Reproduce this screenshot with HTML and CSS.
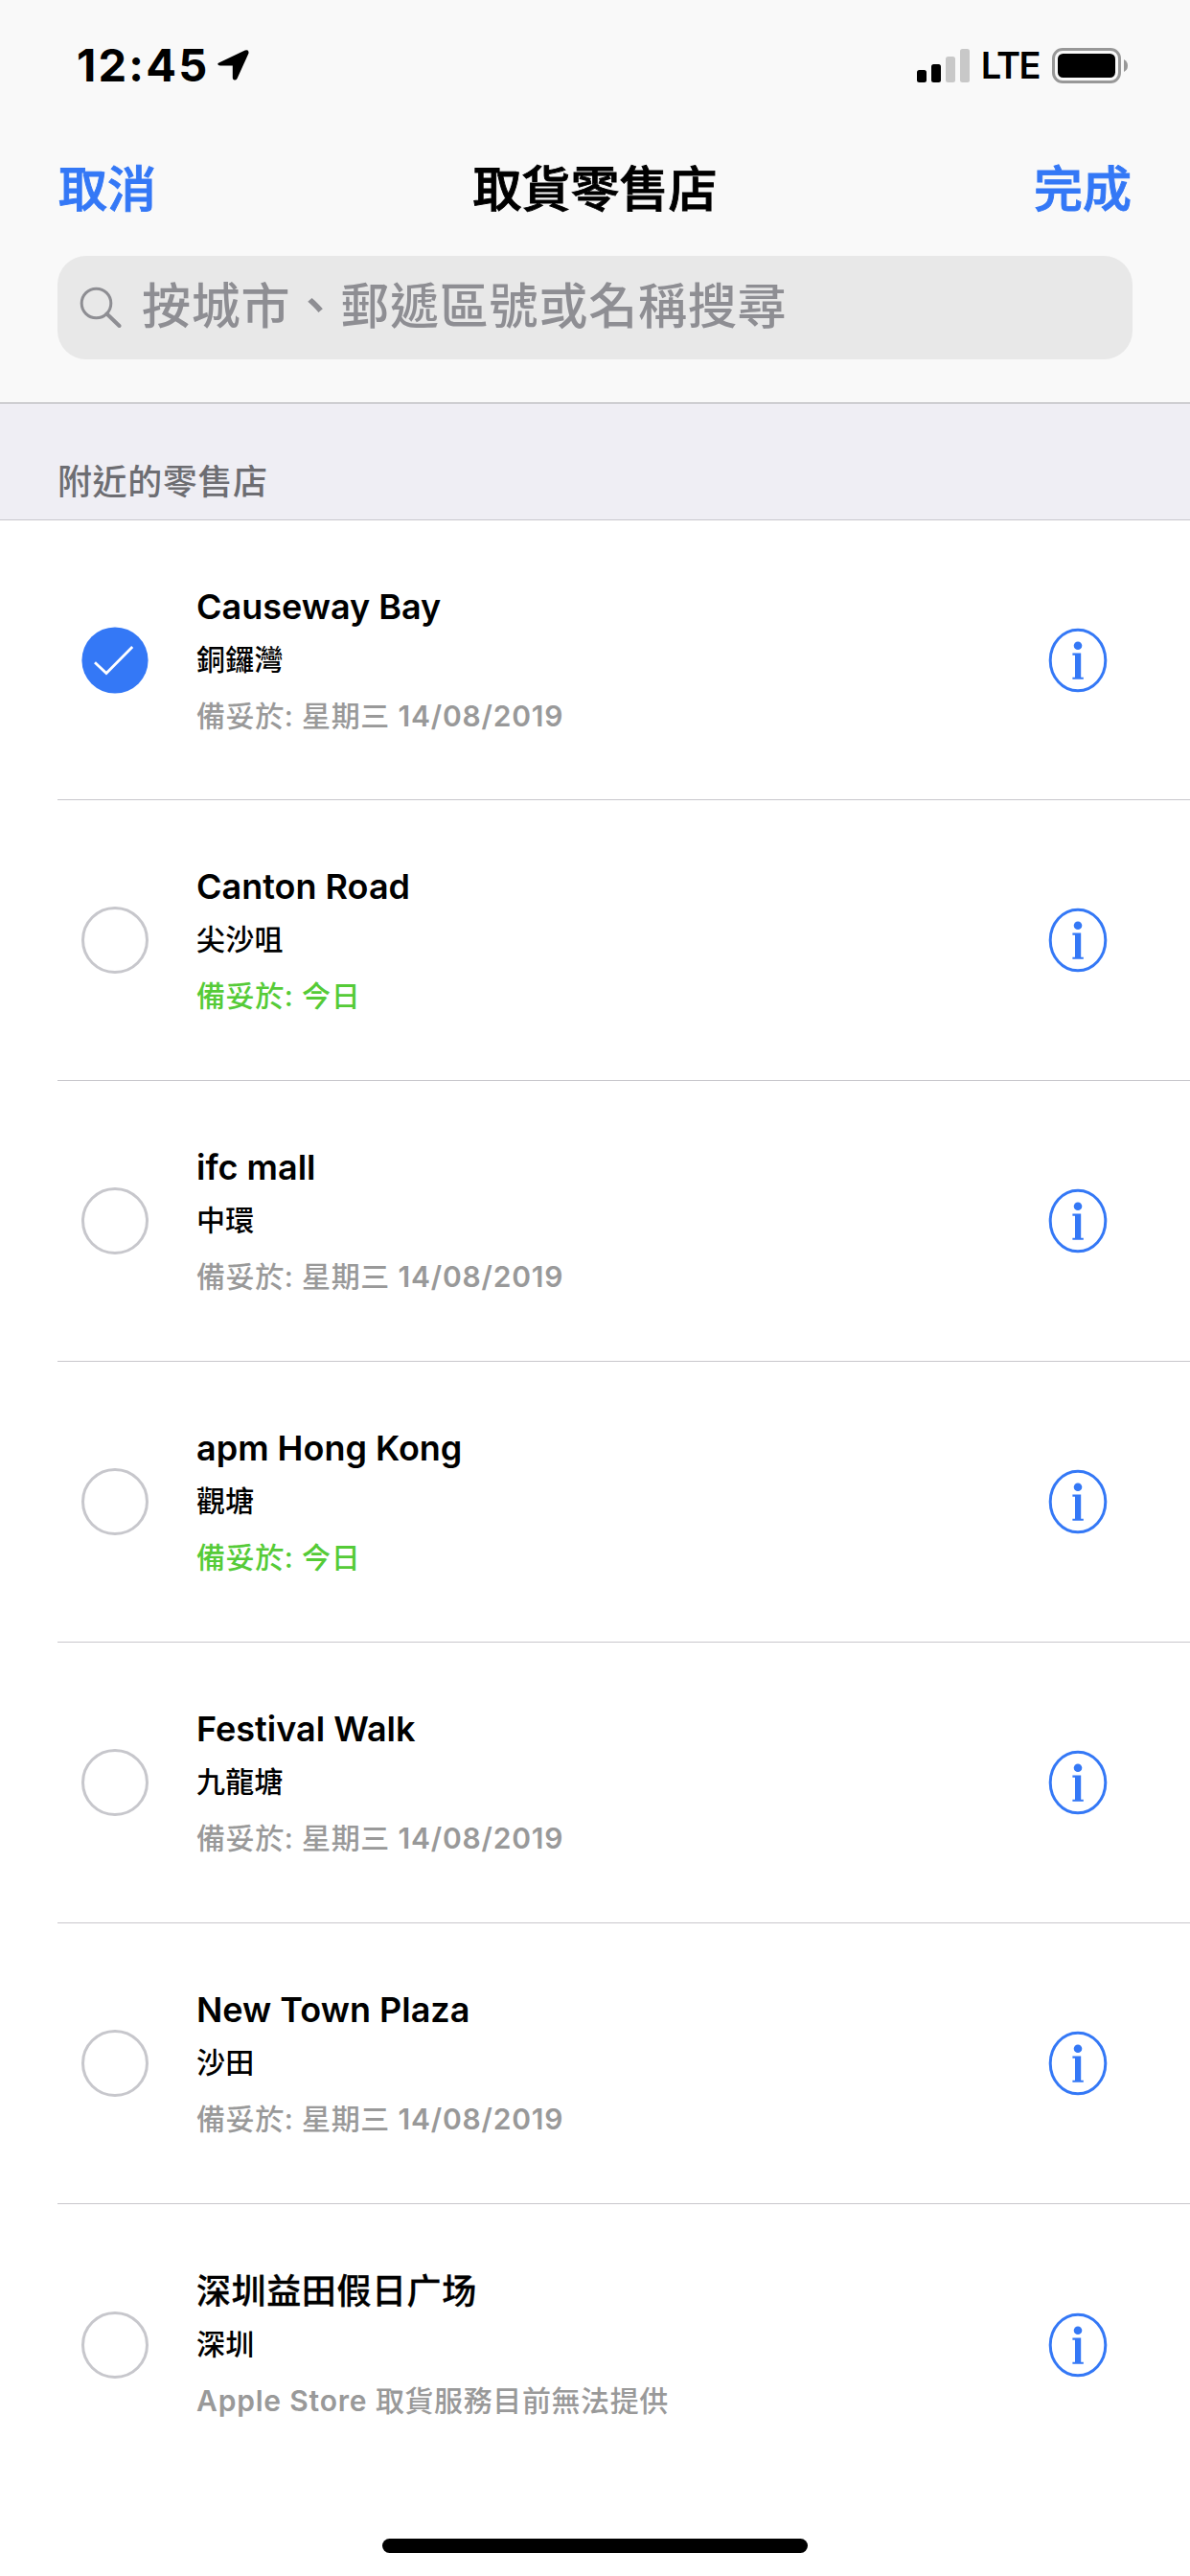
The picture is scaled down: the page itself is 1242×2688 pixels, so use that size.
FILE: index.html
```
<!DOCTYPE html>
<html lang="zh-HK">
<head>
  <meta charset="UTF-8" />
  <meta name="viewport" content="width=device-width, initial-scale=1.0" />
  <title>取貨零售店</title>
  <link rel="stylesheet" href="styles.css">
</head>
<body>
  <svg class="defs">
    <symbol id="info" viewBox="0 0 62 68">
      <ellipse cx="31" cy="34" rx="28.8" ry="31.8" fill="none" stroke="currentColor" stroke-width="3" />
      <circle cx="31" cy="18.8" r="4.3" fill="currentColor" />
      <path d="M25.4 26.6H34.2V51.8H36.8V53.8H25.4V51.8H28V28.8H25.4Z" fill="currentColor" />
    </symbol>
  </svg>

  <header>
    <div class="status-bar">
      <div class="status-left">
        <span class="time">12:45</span>
        <svg class="location" viewBox="0 0 33 32">
          <path d="M2 13.2L28.7 .6Q33 -.6 32.5 3.6L20.5 30Q18.8 32.6 16.6 31Q15.8 30.4 15.8 29V16.6H2.8Q.4 16.4 .2 14.8Q.2 13.8 2 13.2Z" />
        </svg>
      </div>
      <div class="status-right">
        <svg class="signal" viewBox="0 0 55 35">
          <rect x="0" y="22" width="10" height="13" rx="2.5" />
          <rect x="15" y="16" width="10" height="19" rx="2.5" />
          <rect x="30" y="8" width="10" height="27" rx="2.5" fill="#c8c8c8" />
          <rect x="45" y="0" width="10" height="35" rx="2.5" fill="#c8c8c8" />
        </svg>
        <span class="network">LTE</span>
        <svg class="battery" viewBox="0 0 80 37">
          <rect x="1.5" y="1.5" width="69" height="34" rx="9.5" fill="none" stroke="#989898" stroke-width="3" />
          <rect x="6" y="6" width="60" height="25" rx="5.5" />
          <path d="M75 12Q79 14 79 18.5T75 25Z" fill="#989898" />
        </svg>
      </div>
    </div>

    <nav>
      <a class="cancel" href="#">取消</a>
      <h1>取貨零售店</h1>
      <a class="done" href="#">完成</a>
    </nav>

    <div class="search">
      <svg class="search-icon" viewBox="0 0 44 44">
        <circle cx="17.5" cy="17.5" r="15.3" fill="none" stroke="#8e8e93" stroke-width="3" />
        <path d="M28.5 28.5L41.5 41" stroke="#8e8e93" stroke-width="4" stroke-linecap="round" />
      </svg>
      <span>按城市、郵遞區號或名稱搜尋</span>
    </div>
  </header>

  <h2>附近的零售店</h2>

  <ul class="stores">
    <li class="store">
      <svg class="radio" viewBox="0 0 70 70">
        <circle cx="35" cy="35" r="34.6" fill="#3478f6" />
        <path d="M14 37.2L26 48.6L53.2 21" fill="none" stroke="#fff" stroke-width="2.8" />
      </svg>
      <div class="details">
        <div class="name">Causeway Bay</div>
        <div class="area">銅鑼灣</div>
        <div class="ready">備妥於: 星期三 <b>14/08/2019</b></div>
      </div>
      <svg class="info"><use href="#info" /></svg>
    </li>
    <li class="store">
      <span class="radio empty"></span>
      <div class="details">
        <div class="name">Canton Road</div>
        <div class="area">尖沙咀</div>
        <div class="ready today">備妥於: 今日</div>
      </div>
      <svg class="info"><use href="#info" /></svg>
    </li>
    <li class="store">
      <span class="radio empty"></span>
      <div class="details">
        <div class="name">ifc mall</div>
        <div class="area">中環</div>
        <div class="ready">備妥於: 星期三 <b>14/08/2019</b></div>
      </div>
      <svg class="info"><use href="#info" /></svg>
    </li>
    <li class="store">
      <span class="radio empty"></span>
      <div class="details">
        <div class="name">apm Hong Kong</div>
        <div class="area">觀塘</div>
        <div class="ready today">備妥於: 今日</div>
      </div>
      <svg class="info"><use href="#info" /></svg>
    </li>
    <li class="store">
      <span class="radio empty"></span>
      <div class="details">
        <div class="name">Festival Walk</div>
        <div class="area">九龍塘</div>
        <div class="ready">備妥於: 星期三 <b>14/08/2019</b></div>
      </div>
      <svg class="info"><use href="#info" /></svg>
    </li>
    <li class="store">
      <span class="radio empty"></span>
      <div class="details">
        <div class="name">New Town Plaza</div>
        <div class="area">沙田</div>
        <div class="ready">備妥於: 星期三 <b>14/08/2019</b></div>
      </div>
      <svg class="info"><use href="#info" /></svg>
    </li>
    <li class="store">
      <span class="radio empty"></span>
      <div class="details">
        <div class="name chinese" lang="zh-CN">深圳益田假日广场</div>
        <div class="area">深圳</div>
        <div class="ready"><b>Apple Store</b> 取貨服務目前無法提供</div>
      </div>
      <svg class="info"><use href="#info" /></svg>
    </li>
  </ul>

  <div class="home-indicator"></div>
</body>
</html>
```
FILE: styles.css
```
* {
  box-sizing: border-box;
}

body {
  margin: 0;
  height: 2688px;
  display: flex;
  flex-direction: column;
  font-family: Inter, "Noto Sans CJK TC", sans-serif;
  background-color: #fff;
  color: #000;
}

.defs {
  position: absolute;
  width: 0;
  height: 0;
}

header {
  height: 421px;
  background-color: #f9f9f9;
  border-bottom: 1px solid #a7a7aa;
}

.status-bar {
  display: flex;
  justify-content: space-between;
  height: 132px;
  padding: 0 64px 0 80px;
}

.status-left,
.status-right {
  display: flex;
  align-items: center;
  height: 136px;
}

.time {
  font-size: 47px;
  font-weight: 700;
  letter-spacing: 2.2px;
  line-height: 136px;
}

.location {
  width: 33px;
  height: 32px;
  margin-left: 9px;
}

.signal {
  width: 55px;
  height: 35px;
}

.network {
  margin-left: 12px;
  font-size: 38px;
  font-weight: 600;
  letter-spacing: -1.6px;
  line-height: 60px;
}

.battery {
  width: 80px;
  height: 37px;
  margin-left: 13px;
}

nav {
  display: grid;
  grid-template-columns: 1fr auto 1fr;
  align-items: center;
  height: 135px;
  padding: 0 61px 3px;
  font-size: 51px;
  line-height: 80px;
  -webkit-text-stroke: 0.9px;
}

nav a {
  color: #3478f6;
  font-weight: 500;
  text-decoration: none;
}

nav .done {
  text-align: right;
}

h1 {
  margin: 0;
  font-size: 51px;
  font-weight: 500;
}

.search {
  display: flex;
  align-items: center;
  height: 108px;
  margin: 0 60px;
  padding: 0 23px;
  border-radius: 30px;
  background-color: #e8e8e8;
  color: #8e8e93;
  font-size: 51px;
  font-weight: 500;
  letter-spacing: 0.8px;
  line-height: 106px;
}

.search span {
  padding-bottom: 2px;
}

.search-icon {
  width: 44px;
  height: 44px;
  margin-right: 21px;
}

h2 {
  height: 122px;
  margin: 0;
  padding: 55px 60px 0;
  border-bottom: 1px solid #c8c7cc;
  background-color: #efeef4;
  color: #6d6d72;
  font-size: 36px;
  font-weight: 500;
  letter-spacing: 0.6px;
  line-height: 54px;
}

.stores {
  flex: 1;
  margin: 0;
  padding: 0;
  list-style: none;
}

.store {
  display: flex;
  align-items: center;
  height: 293px;
  margin-left: 60px;
  padding: 0 86px 0 25px;
  border-bottom: 1px solid #c8c7cc;
}

.store:first-child {
  height: 292px;
}

.store:last-child {
  border-bottom: none;
}

.radio {
  width: 70px;
  height: 70px;
}

.radio.empty {
  border: 3px solid #c7c7cc;
  border-radius: 50%;
}

.details {
  flex: 1;
  padding: 6px 0 0 50px;
}

.name {
  font-size: 36px;
  font-weight: 600;
  line-height: 56px;
}

.name.chinese {
  font-weight: 500;
  letter-spacing: 0.6px;
  -webkit-text-stroke: 0.3px;
}

.area {
  font-size: 30px;
  font-weight: 500;
  letter-spacing: 0.3px;
  line-height: 54px;
}

.ready {
  color: #999;
  font-size: 30px;
  font-weight: 500;
  letter-spacing: 0.6px;
  line-height: 64px;
}

.ready b {
  font-weight: 600;
  letter-spacing: 0.8px;
}

.ready.today {
  color: #55cb37;
}

.info {
  width: 62px;
  height: 68px;
  color: #3478f6;
}

.home-indicator {
  flex-shrink: 0;
  width: 444px;
  height: 15px;
  margin: 0 auto 24px;
  border-radius: 8px;
  background-color: #000;
}
```
